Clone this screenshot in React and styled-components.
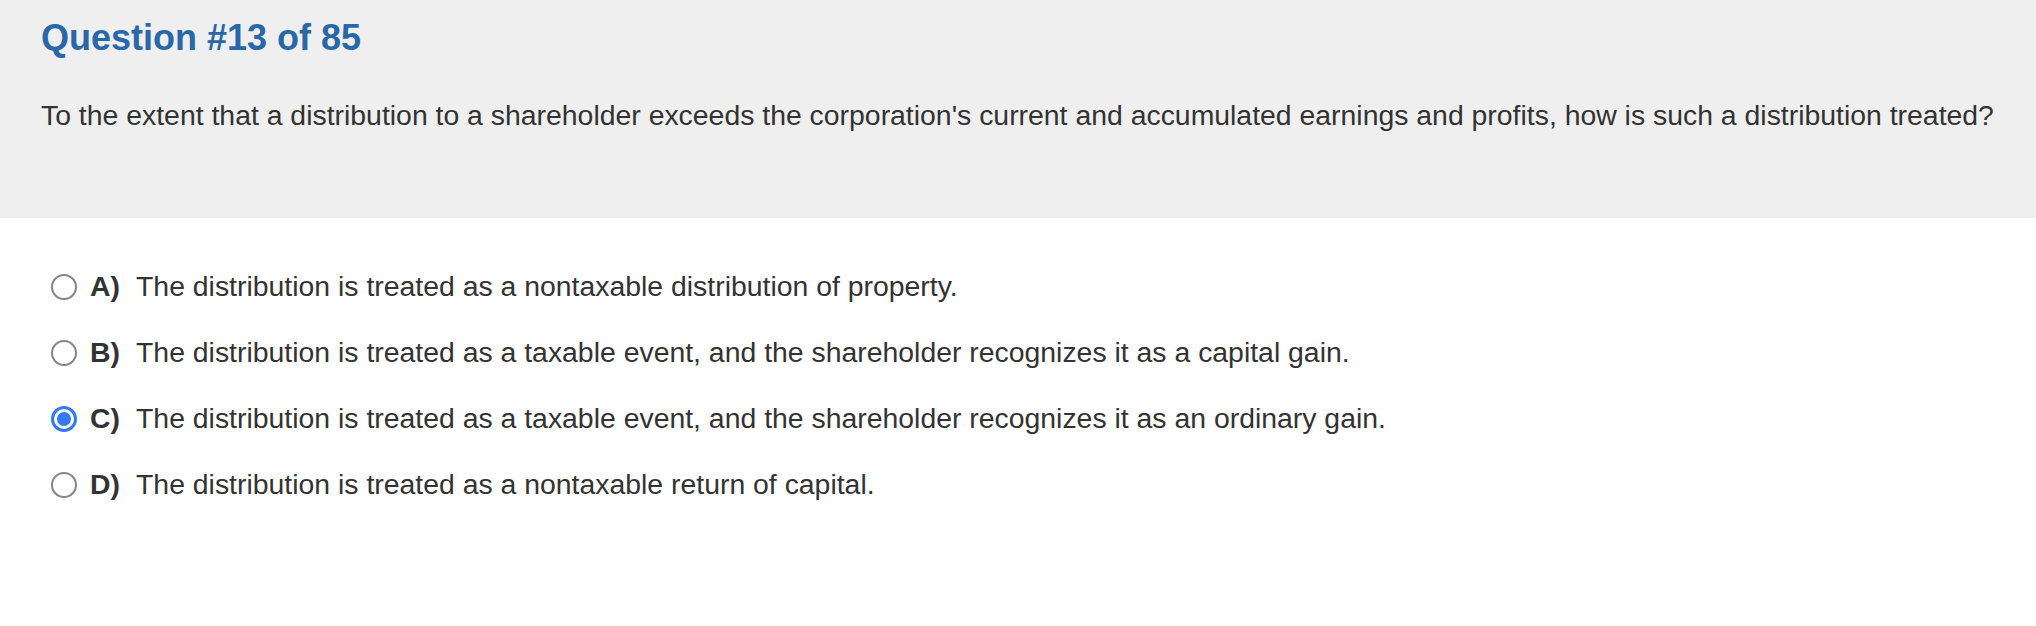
import React from "react";
import styled, { createGlobalStyle } from "styled-components";

const Global = createGlobalStyle`
  html, body { margin: 0; padding: 0; background: #ffffff; }
  body { font-family: "Liberation Sans", Arial, Helvetica, sans-serif; color: #333333; }
  * { box-sizing: border-box; }
`;

const Page = styled.div`
  display: flex;
  flex-direction: column;
  width: 100%;
`;

const Header = styled.header`
  background: #efefef;
  height: 218px;
  padding: 16px 41px 0 41px;
  display: flex;
  flex-direction: column;
  gap: 38px;
`;

const Title = styled.h1`
  margin: 0;
  font-size: 36px;
  line-height: 44px;
  font-weight: 700;
  color: #2968a8;
`;

const Prompt = styled.p`
  margin: 0;
  font-size: 28.4px;
  line-height: 34px;
  color: #333333;
`;

const Options = styled.div`
  display: flex;
  flex-direction: column;
  gap: 32px;
  padding: 51px 0 0 51px;
`;

const Row = styled.label`
  display: flex;
  align-items: center;
  font-size: 28.4px;
  line-height: 34px;
  color: #333333;
  cursor: pointer;
`;

const Radio = styled.span`
  flex: 0 0 auto;
  width: 26px;
  height: 26px;
  border-radius: 50%;
  background: #ffffff;
  border: ${(p) => (p.$checked ? "3px solid #3478f6" : "2px solid #858585")};
  display: flex;
  align-items: center;
  justify-content: center;
  margin-right: 13px;
  margin-top: 2px;
  &::after {
    content: "";
    display: ${(p) => (p.$checked ? "block" : "none")};
    width: 14px;
    height: 14px;
    border-radius: 50%;
    background: #3478f6;
  }
`;

const Letter = styled.span`
  font-weight: 700;
  width: 46px;
  flex: 0 0 auto;
`;

const OptionText = styled.span``;

const options = [
  { k: "A)", t: "The distribution is treated as a nontaxable distribution of property." },
  { k: "B)", t: "The distribution is treated as a taxable event, and the shareholder recognizes it as a capital gain." },
  { k: "C)", t: "The distribution is treated as a taxable event, and the shareholder recognizes it as an ordinary gain.", checked: true },
  { k: "D)", t: "The distribution is treated as a nontaxable return of capital." },
];

export default function App() {
  return (
    <Page>
      <Global />
      <Header>
        <Title>Question #13 of 85</Title>
        <Prompt>
          To the extent that a distribution to a shareholder exceeds the corporation's current and accumulated earnings and profits, how is such a distribution treated?
        </Prompt>
      </Header>
      <Options>
        {options.map((o) => (
          <Row key={o.k}>
            <Radio $checked={!!o.checked} />
            <Letter>{o.k}</Letter>
            <OptionText>{o.t}</OptionText>
          </Row>
        ))}
      </Options>
    </Page>
  );
}
